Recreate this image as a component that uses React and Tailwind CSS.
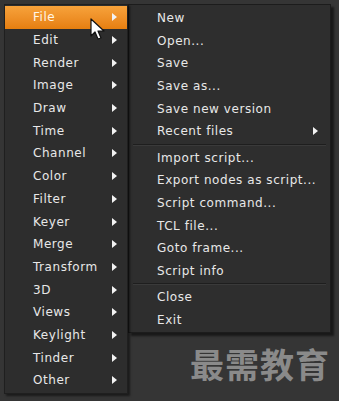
import React from 'react';

const nodeMenu = [
  'File', 'Edit', 'Render', 'Image', 'Draw', 'Time', 'Channel', 'Color', 'Filter',
  'Keyer', 'Merge', 'Transform', '3D', 'Views', 'Keylight', 'Tinder', 'Other',
];

const fileMenu = [
  ['New', 'Open...', 'Save', 'Save as...', 'Save new version', 'Recent files'],
  ['Import script...', 'Export nodes as script...', 'Script command...', 'TCL file...', 'Goto frame...', 'Script info'],
  ['Close', 'Exit'],
];

const Arrow = () => (
  <svg width="5" height="8" viewBox="0 0 5 8" className="shrink-0">
    <path d="M0 0 L5 4 L0 8 Z" fill="#f2f2f2" />
  </svg>
);

const Cursor = () => (
  <svg width="16" height="24" viewBox="0 0 16 24" className="absolute left-[85px] top-[13px]">
    <path d="M1 1 L1 18 L5 14 L8 21 L11 20 L8 13 L14 13 Z" fill="#ffffff" stroke="#111" strokeWidth="1.2" strokeLinejoin="round" />
  </svg>
);

export default function App() {
  return (
    <div
      className="w-[339px] h-[401px] bg-[#353535] flex items-start pt-[4px] pl-[4px] overflow-hidden text-[12px] text-[#e8e8e8] tracking-[0.55px]"
      style={{ fontFamily: '"DejaVu Sans", Verdana, sans-serif' }}
    >
      {/* left menu */}
      <div className="relative w-[124px] bg-[#2d2d2d] border border-[#1f1f1f] shadow-[2px_2px_2px_rgba(0,0,0,0.5)] py-[1px] shrink-0">
        {nodeMenu.map((item, i) => (
          <div
            key={item}
            className={
              i === 0
                ? 'h-[22.7px] flex items-center justify-between pl-[28px] pr-[10px] bg-gradient-to-b from-[#f7a23a] to-[#e67f0e] text-[#fff6e8]'
                : 'h-[22.7px] flex items-center justify-between pl-[28px] pr-[10px]'
            }
          >
            <span>{item}</span>
            <Arrow />
          </div>
        ))}
        <Cursor />
      </div>

      {/* right column: submenu + watermark */}
      <div className="flex flex-col w-[203px] shrink-0">
        <div className="bg-[#2e2e2e] border border-[#1c1c1c] shadow-[3px_3px_2px_rgba(0,0,0,0.55)] pt-[2px] pb-[1px]">
          {fileMenu.map((group, g) => (
            <div key={g}>
              {g > 0 && (
                <div className="mx-[4px] my-[1px] border-t border-[#1e1e1e] border-b border-b-[#3a3a3a]" />
              )}
              {group.map((item) => (
                <div key={item} className="h-[22.6px] flex items-center justify-between pl-[28px] pr-[12px]">
                  <span>{item}</span>
                  {item === 'Recent files' && <Arrow />}
                </div>
              ))}
            </div>
          ))}
        </div>
        <div
          className="mt-[14px] pr-[1px] text-right text-[34px] font-bold leading-none text-[#8a8a8a] tracking-[1px]"
          style={{ fontFamily: '"Noto Sans CJK SC", sans-serif' }}
        >
          最需教育
        </div>
      </div>
    </div>
  );
}
